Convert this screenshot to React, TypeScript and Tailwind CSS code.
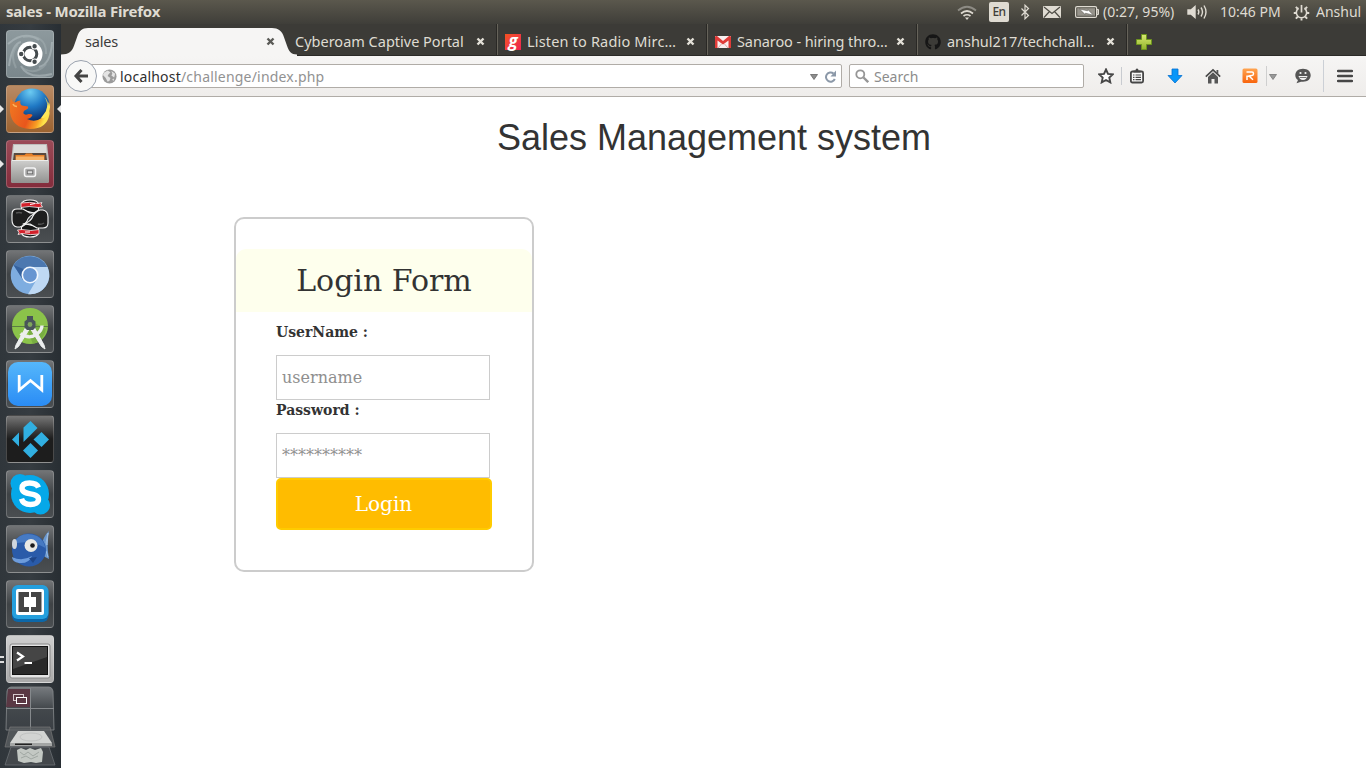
import React from "react";
import { FaGithub } from "react-icons/fa";

type Kids = { children?: React.ReactNode };

/* ---------- launcher ---------- */

function Tile({ children, bg }: Kids & { bg: string }) {
  return (
    <div className={`relative h-12 w-12 shrink-0 overflow-hidden rounded-[4px] border border-white/20 ${bg}`}>
      <svg viewBox="0 0 48 48" className="-m-px block h-12 w-12">
        {children}
      </svg>
    </div>
  );
}

const glass = "bg-linear-to-b from-[#727476] via-[#3f4346] to-[#4a4e51]";

function Dash() {
  return (
    <Tile bg="bg-linear-to-b from-[#8d999d] to-[#7b878c]">
      <g fill="none" stroke="#b9c4c7" strokeWidth="2" opacity=".5">
        <path d="M2 14Q18 0 33 10M46 12Q45 34 33 37M46 44Q22 50 15 36M3 36Q6 14 15 12" />
        <path d="M17 7Q41 4 40 24M40 34Q30 46 16 38M10 38Q3 24 12 15" opacity=".6" />
      </g>
      <circle cx="24" cy="24" r="12.5" fill="#fff" />
      <circle cx="24" cy="24" r="6.800" fill="none" stroke="#454b4e" strokeWidth="3" />
      <g fill="#454b4e" stroke="#fff" strokeWidth="1.200">
        <circle cx="15.200" cy="24" r="2.800" />
        <circle cx="28.600" cy="16.200" r="2.800" />
        <circle cx="28.600" cy="31.800" r="2.800" />
      </g>
    </Tile>
  );
}

function Firefox() {
  return (
    <Tile bg="bg-linear-to-b from-[#b98a64] to-[#9c6330]">
      <defs>
        <radialGradient id="ffb" cx=".45" cy=".1" r=".85">
          <stop offset="0" stopColor="#6ccbf2" />
          <stop offset=".5" stopColor="#1f78c4" />
          <stop offset="1" stopColor="#0b2a66" />
        </radialGradient>
        <linearGradient id="ffo" x1="0" y1="0" x2="1" y2=".3">
          <stop offset="0" stopColor="#f07a22" />
          <stop offset=".6" stopColor="#e9561c" />
          <stop offset=".85" stopColor="#f8a024" />
          <stop offset="1" stopColor="#ffe34a" />
        </linearGradient>
      </defs>
      <circle cx="26" cy="21" r="17.500" fill="url(#ffb)" />
      <path d="M5 13Q6 17 9 17.500Q12 15.500 14.500 15.500Q13.500 19 16 20.500L22 21.500Q23 23.500 19.500 25Q17 26 17.500 28.500Q19 30.500 22.500 29Q25 28.500 26.500 30Q25 33.500 21 34Q29 38 35.500 33Q40 30 41 23Q44 25 43.500 29Q41 44 24 44Q6 43 4 27Q3.500 18 5 13z" fill="url(#ffo)" />
      <path d="M38.500 12Q43 18 40 26L35 33Q39 34 42 29Q46 21 42.500 17L42 21Q42 15 38.500 12z" fill="#ffe65a" />
      <path d="M7 19Q8 21.500 11 21.500" fill="none" stroke="#fbb35a" strokeWidth="1.500" />
    </Tile>
  );
}

function Files() {
  return (
    <Tile bg="bg-linear-to-b from-[#9a4a57] to-[#842c3c]">
      <defs>
        <linearGradient id="fil" x1="0" y1="0" x2="0" y2="1">
          <stop offset="0" stopColor="#cfcfcd" />
          <stop offset="1" stopColor="#929290" />
        </linearGradient>
      </defs>
      <path d="M7 4h34l2 17v20q0 2-2 2H7q-2 0-2-2V21z" fill="#bdbdbb" />
      <path d="M8 5h32l.8 8H7z" fill="#dcdcda" />
      <path d="M8 13h32l1 7H7z" fill="#5a4a40" />
      <path d="M9.500 20v-5h9l1.500-1.500h6l1 1.500h11.500v5z" fill="#e8822a" />
      <path d="M10 16.500h28V20H10z" fill="#f6b46a" />
      <path d="M6.500 20h35l1.500 1v20q0 2-2 2H7q-2 0-2-2V21z" fill="url(#fil)" />
      <path d="M6 20.500h36" stroke="#ececea" />
      <rect x="18.500" y="28" width="11" height="8.500" rx="2" fill="#aaa" stroke="#f5f5f5" strokeWidth="1.500" />
      <rect x="21.300" y="30.800" width="5.400" height="3" fill="#ddd" stroke="#666" strokeWidth=".8" />
    </Tile>
  );
}

function NinjaHalf() {
  return (
    <g stroke="#f4f4f4" strokeWidth="1.100" strokeLinejoin="round">
      <path d="M15.500 15V9q1-4 8.500-4t8.500 4v6L28 18z" fill="#151515" />
      <path d="M6 19Q6 14 11 14H17L24 18H31Q23 20 21 26Q19 30 14 32H11Q6 31 6 25z" fill="#1e1e1e" />
      <path d="M15 8q9-1.500 17 .5l4-1-1 2 1.500 2.500-4.500.5Q23 10.500 15 12.500z" fill="#d3202a" strokeWidth=".8" />
    </g>
  );
}

function Ninja() {
  return (
    <Tile bg={glass}>
      <NinjaHalf />
      <g transform="rotate(180 24 23.500)">
        <NinjaHalf />
      </g>
      <path d="M24 9.500l5-1M19 37h5" stroke="#fff" strokeWidth="1.200" />
      <path d="M10 18q3-1 6 0M32 29q3 1 6-1" stroke="#555" strokeWidth="1.500" fill="none" />
    </Tile>
  );
}

function Chromium() {
  return (
    <Tile bg={glass}>
      <circle cx="24" cy="25" r="19.300" fill="#7eade0" />
      <path d="M7.500 15A19.300 19.300 0 0 1 41 17H24L17 29z" fill="#4c78b0" />
      <path d="M24 17h17.500A19.300 19.300 0 0 1 22 44.200L31 29z" fill="#bfd9f4" />
      <path d="M7.500 15L17 30l3-10z" fill="#35619d" />
      <circle cx="24" cy="25" r="8.500" fill="#f3f8fe" />
      <circle cx="24" cy="25" r="6.900" fill="#6795d1" />
    </Tile>
  );
}

function AndroidStudio() {
  return (
    <Tile bg={glass}>
      <circle cx="24" cy="21" r="18" fill="#8bc34a" />
      <path d="M25 16l15 8a18 18 0 0 1-13 15L20 22z" fill="#6d9f3c" opacity=".6" />
      <path d="M6 21.500h36" stroke="#5b7d43" />
      <path d="M14.500 28.500Q23 35 31 29Q36 25 36 20.500" stroke="#eceeee" strokeWidth="3.400" fill="none" />
      <path d="M20.500 21L10 40l-1 4 3.500-2.500L24 23zM27.500 21L38 40l1 4-3.500-2.500L24 23z" fill="#eceeee" stroke="#eceeee" />
      <path d="M21 11h6v3.500l2.500 2v6L27 25h-6l-2.500-2.500v-6l2.500-2z" fill="#49545a" />
      <circle cx="24" cy="19.500" r="2.400" fill="#7fa65d" />
    </Tile>
  );
}

function Writer() {
  return (
    <Tile bg={glass}>
      <defs>
        <linearGradient id="wps" x1="0" y1="0" x2="0" y2="1">
          <stop offset="0" stopColor="#55b7fb" />
          <stop offset="1" stopColor="#2a8cf5" />
        </linearGradient>
      </defs>
      <rect x="2" y="2" width="44" height="44" rx="10" fill="url(#wps)" />
      <path d="M13.200 15v15L24.500 20.500 35.800 30V15" fill="none" stroke="#fff" strokeWidth="2.800" />
    </Tile>
  );
}

function Kodi() {
  return (
    <Tile bg="bg-linear-to-b from-[#777] to-[#1d1d1d] to-50%">
      <g fill="#31afe1">
        <path d="M17.500 27V12.500L24.500 6l7 7z" />
        <path d="M27.500 24.500l8-7.500 7.500 7.500-7.500 7.500z" />
        <path d="M17 35.500l7.500-7.500 7.500 7.500-7.500 7.500z" />
        <path d="M6 24.500l7-7v14z" />
      </g>
    </Tile>
  );
}

function Skype() {
  return (
    <Tile bg={glass}>
      <g fill="#05a8e9">
        <circle cx="24" cy="24" r="19" />
        <circle cx="14" cy="13.500" r="9.500" />
        <circle cx="34.500" cy="35" r="9.500" />
      </g>
      <path d="M32.500 17.500C31 13.500 27 13 23.500 13c-5 0-7.500 2-7.500 5.300 0 8 16.500 3 16.500 11 0 3.500-3.500 5.200-8 5.200-5 0-8-2-9-5.800" fill="none" stroke="#fff" strokeWidth="5.400" />
    </Tile>
  );
}

function Fish() {
  return (
    <Tile bg={glass}>
      <path d="M35 23q2-12 8-17-3 12 0 28-5-2-8-6z" fill="#6a98d0" />
      <path d="M40 18l2-10-1 12zM40 26l2 6" stroke="#9abbe0" fill="#8bb1dd" />
      <ellipse cx="23" cy="25" rx="17" ry="16.500" fill="#2a5ba9" />
      <path d="M8 17Q16 5 31 11q7 4 8.500 12Q24 14 7 19z" fill="#467ac3" />
      <path d="M6 32q10 5 20-1-3 8-13 7-7-1-7-6z" fill="#6d9cdc" />
      <ellipse cx="8.500" cy="19" rx="2.500" ry="5" fill="#cfd6dd" />
      <circle cx="25" cy="20.500" r="6.500" fill="#e9e9e4" />
      <circle cx="26.500" cy="20.500" r="2.300" fill="#1b1b1b" />
      <path d="M23 33l8-1-4 6z" fill="#1f4688" />
    </Tile>
  );
}

function Brackets() {
  return (
    <Tile bg={glass}>
      <rect x="6" y="7" width="36.500" height="35" rx="6" fill="#0c67a8" />
      <rect x="6" y="5" width="36.500" height="34" rx="6" fill="#259fdd" />
      <rect x="10" y="9" width="28" height="26" rx="2" fill="#fff" />
      <path d="M12.500 12H23v5h-5v10h5v5H12.500zM25 12h10.500v20H25v-5h5V17h-5z" fill="#444" />
    </Tile>
  );
}

function Terminal() {
  return (
    <Tile bg="bg-linear-to-b from-[#cfcfcf] to-[#a9a9a9]">
      <rect x="4" y="9" width="40" height="34" rx="2" fill="#e4e4e4" stroke="#888" />
      <rect x="6.500" y="11.500" width="35" height="28" fill="#292929" stroke="#111" />
      <path d="M7 12h34v10L7 34z" fill="#454545" />
      <path d="M11 17.500l6 4-6 4M18.500 28h7.500" fill="none" stroke="#fff" strokeWidth="2.200" />
    </Tile>
  );
}

function FoldedStack() {
  return (
    <svg viewBox="0 0 54 81" className="mt-1 -ml-[3px] block h-[81px] w-[54px] shrink-0">
      <defs>
        <linearGradient id="fg" x1="0" y1="0" x2="0" y2="1">
          <stop offset="0" stopColor="#777b7f" />
          <stop offset=".5" stopColor="#43484c" />
          <stop offset="1" stopColor="#3a3f44" />
        </linearGradient>
      </defs>
      <path d="M8 1h38q3 0 4 4l1 39H3L4 5q1-4 4-4z" fill="url(#fg)" stroke="#85898c" strokeWidth=".8" />
      <path d="M5 3h22v18H3z" fill="#5a3844" />
      <path d="M3 22.500h48M27.500 2v42" stroke="#85898c" />
      <rect x="10.500" y="8.500" width="10" height="6" fill="none" stroke="#d5c8cc" />
      <rect x="13.500" y="11.500" width="10" height="6" fill="#5a3844" stroke="#fff" />
      <path d="M7 41h40l5 20H2z" fill="#5c6063" fillOpacity=".75" stroke="#777" strokeWidth=".7" />
      <path d="M15 45h26l8 12H7z" fill="#d2d4d2" />
      <path d="M7 57h42v3H7z" fill="#a3a5a4" />
      <ellipse cx="28" cy="51" rx="11" ry="4" fill="none" stroke="#c0c2c1" />
      <path d="M8 61h38l6 18H2z" fill="#484c50" fillOpacity=".8" stroke="#707478" strokeWidth=".7" />
      <path d="M14 64l4-2 5 2 4-2 5 2 6-2 2 4-1 10-6 1-5-1-7 1-6-2z" fill="#c3c8c3" />
      <path d="M17 66l4 3 4-3 5 4 6-4M18 72l5-2 5 3 7-3" stroke="#a0a7a2" fill="none" />
      <path d="M12 57.500h17V59H12z" fill="#222" />
    </svg>
  );
}

function Pip({ flip, top }: { flip?: boolean; top: string }) {
  return (
    <svg viewBox="0 0 4 8" className={`absolute h-2 w-1 ${flip ? "right-0" : "left-0"} ${top}`}>
      <path d={flip ? "M4 0v8L0 4z" : "M0 0v8l4-4z"} fill="#e8e8e8" />
    </svg>
  );
}

function Launcher() {
  return (
    <aside className="relative flex w-[61px] shrink-0 flex-col gap-[7px] overflow-hidden bg-linear-to-r from-[#30363b] via-[#363c41] to-[#282e33] pt-[6px] pl-[6px]">
      <Dash />
      <Firefox />
      <Files />
      <Ninja />
      <Chromium />
      <AndroidStudio />
      <Writer />
      <Kodi />
      <Skype />
      <Fish />
      <Brackets />
      <Terminal />
      <div className="-mt-[8px]">
        <FoldedStack />
      </div>
      <Pip top="top-[81px]" />
      <Pip flip top="top-[81px]" />
      <Pip top="top-[136px]" />
      <div className="absolute top-[632px] left-0 flex flex-col gap-[3px]">
        <i className="h-0.5 w-1 bg-[#ddd]" />
        <i className="h-0.5 w-1 bg-[#ddd]" />
      </div>
    </aside>
  );
}

/* ---------- top panel ---------- */

function Panel() {
  return (
    <header className="flex h-6 shrink-0 items-center bg-linear-to-b from-[#5b584d] to-[#3f3e39] pl-[6px] text-[14px] text-[#dfdbd2]">
      <span className="grow pb-[2px] text-[15px] leading-5 font-bold tracking-[-0.2px] whitespace-nowrap">sales - Mozilla Firefox</span>
      <svg viewBox="0 0 20 16" className="mt-0.5 h-4 w-5 shrink-0" fill="none" strokeWidth="1.700">
        <path d="M1 5.500Q10-2 19 5.500" stroke="#8d8b84" />
        <path d="M4 8.500Q10 3.500 16 8.500M6.500 11Q10 8.500 13.500 11" stroke="#dfdbd2" />
        <path d="M8 12.500h4L10 15z" fill="#dfdbd2" />
      </svg>
      <span className="ml-[12px] flex h-5 w-5 shrink-0 items-center justify-center rounded-[2px] bg-[#dfdbd2] text-[12px] font-medium tracking-[-0.5px] text-[#3f3e39]">En</span>
      <svg viewBox="0 0 10 16" className="ml-[11px] h-4 w-[10px] shrink-0" fill="none" stroke="#dfdbd2" strokeWidth="1.200">
        <path d="M1.500 4.500l7 7L5 14.800V1.200l3.500 3.300-7 7" />
      </svg>
      <svg viewBox="0 0 18 12" className="ml-[13px] h-3 w-[18px] shrink-0">
        <rect width="18" height="12" rx="1" fill="#dfdbd2" />
        <path d="M1 1l8 6.500L17 1M1 11.500l5.500-6M17 11.500l-5.500-6" fill="none" stroke="#4d4b44" strokeWidth="1.200" />
      </svg>
      <svg viewBox="0 0 25 12" className="ml-[14px] h-3 w-[25px] shrink-0">
        <rect x=".6" y=".6" width="21" height="10.800" rx="1.500" fill="none" stroke="#dfdbd2" strokeWidth="1.200" />
        <rect x="2.200" y="2.200" width="17.800" height="7.600" fill="#96938b" />
        <path d="M22 3.500h1.500v5H22z" fill="none" stroke="#dfdbd2" />
        <path d="M4.500 3l8 1.800.3-1.300L18.500 9.200l-8-2-.3 1.400z" fill="#fff" stroke="#4d4b44" strokeWidth=".5" />
      </svg>
      <span className="ml-[3px] w-[84px] shrink-0 leading-5 whitespace-nowrap">(0:27, 95%)</span>
      <svg viewBox="0 0 21 16" className="h-4 w-[21px] shrink-0" fill="none" stroke="#dfdbd2" strokeWidth="1.400">
        <path d="M1 6h3l4-3.500v11L4 10H1z" fill="#dfdbd2" />
        <path d="M11 5.500q1.700 2.500 0 5M14 3.500q3 4.500 0 9" />
        <path d="M17 1.500q4 6.500 0 13" />
      </svg>
      <span className="ml-[12px] w-[73px] shrink-0 leading-5 whitespace-nowrap">10:46 PM</span>
      <svg viewBox="0 0 18 18" className="h-[17px] w-[17px] shrink-0" fill="none" stroke="#dfdbd2">
        <path d="M6 4.500A5.500 5.500 0 1 0 12 4.500" strokeWidth="1.700" />
        <path d="M9 1v8" strokeWidth="1.800" />
        <path d="M5 5L3 3M13 5l2-2M3.500 9.500H.8M14.500 9.500h2.700M5 13.500l-2 2M13 13.500l2 2M9 15v2.500" strokeWidth="2" />
      </svg>
      <span className="ml-[6px] w-[50px] shrink-0 leading-5 whitespace-nowrap">Anshul</span>
    </header>
  );
}

/* ---------- browser chrome ---------- */

function Close() {
  return (
    <svg viewBox="0 0 9 9" className="mr-[12px] ml-auto h-[9px] w-[9px] shrink-0">
      <path d="M1.500 1.500l6 6M7.500 1.500l-6 6" stroke="#e3e0d8" strokeWidth="2.400" />
    </svg>
  );
}

function Tab({ children, icon, tracking }: Kids & { icon?: React.ReactNode; tracking: string }) {
  return (
    <div className="flex h-full w-[210px] shrink-0 items-center border-r border-[#66635a] pt-[4px] shadow-[inset_-1px_0_0_#292825]">
      {icon}
      <span className={`whitespace-nowrap text-[#dfdbd2] ${tracking}`}>{children}</span>
      <Close />
    </div>
  );
}

function Tabs() {
  return (
    <div className="flex h-8 shrink-0 border-b border-[#2b2a27] bg-[#3c3b37] text-[14.5px]">
      <div className="relative flex w-[230px] shrink-0 items-center pt-[4px] pl-6 text-[#3c3c3c]">
        <svg viewBox="0 0 236 29" className="absolute top-[4px] left-0 h-7 w-[236px]" preserveAspectRatio="none">
          <path d="M0 29v-1.500c8 0 11-3 13-9l3-9C18 3 21 0 27 0h184c6 0 10 3 12 9.500l3 9c2 6 4 9 10 9V29z" fill="#f6f5f4" />
        </svg>
        <span className="relative tracking-[-0.2px]">sales</span>
        <svg viewBox="0 0 9 9" className="absolute top-[13px] left-[205px] h-[9px] w-[9px]">
          <path d="M1.500 1.500l6 6M7.500 1.500l-6 6" stroke="#5a5a56" strokeWidth="2.400" />
        </svg>
      </div>
      <div className="flex h-full w-[207px] shrink-0 items-center border-r border-[#66635a] pt-[4px] pl-1 shadow-[inset_-1px_0_0_#292825]">
        <span className="whitespace-nowrap text-[#dfdbd2]">Cyberoam Captive Portal</span>
        <Close />
      </div>
      <Tab
        tracking="tracking-[0.17px]"
        icon={
          <span className="mr-[6px] ml-[7px] flex h-4 w-4 items-center justify-center bg-linear-to-br from-[#f4511e] to-[#ee2150] pb-[3px] font-['Open_Sans'] text-[17px] leading-none font-bold text-white italic">
            g
          </span>
        }
      >
        Listen to Radio Mirc…
      </Tab>
      <Tab
        tracking="tracking-[-0.1px]"
        icon={
          <svg viewBox="0 0 16 12" className="mr-[6px] ml-[7px] h-3 w-4 shrink-0">
            <path d="M0 0h16v12H0z" fill="#f7eeee" />
            <path d="M0 1q0-1 1-1h1l6 5 6-5h1q1 0 1 1v11h-2.500V4.500L8 8.500l-5.500-4V12H0z" fill="#df3b38" />
            <path d="M3 12l3.500-4M13 12L9.500 8" stroke="#dba9a8" />
          </svg>
        }
      >
        Sanaroo - hiring thro…
      </Tab>
      <Tab tracking="tracking-[-0.05px]" icon={<FaGithub className="mr-[6px] ml-[7px] h-4 w-4 shrink-0 text-[#161616]" />}>
        anshul217/techchall…
      </Tab>
      <svg viewBox="0 0 16 16" className="mt-[10px] ml-[8px] h-4 w-4">
        <defs>
          <linearGradient id="pl" x1="0" y1="0" x2="0" y2="1">
            <stop offset="0" stopColor="#d8ea72" />
            <stop offset="1" stopColor="#92b32b" />
          </linearGradient>
        </defs>
        <path d="M5.500.5h5v5h5v5h-5v5h-5v-5h-5v-5h5z" fill="url(#pl)" stroke="#6d951d" />
      </svg>
    </div>
  );
}

function Toolbar() {
  return (
    <div className="flex h-[41px] shrink-0 items-center border-b border-[#b0aca7] bg-linear-to-b from-[#f6f5f4] to-[#efedeb] text-[14px]">
      <div className="z-10 ml-1 flex h-8 w-8 shrink-0 items-center justify-center rounded-full border border-[#9aa2ae] bg-[#f8f8f7]">
        <svg viewBox="0 0 16 16" className="h-4 w-4">
          <path d="M8.500 2L3 8l5.500 6M3 8h12" fill="none" stroke="#444" strokeWidth="3" />
        </svg>
      </div>
      <div className="-ml-[6px] flex h-6 w-[751px] shrink-0 items-center rounded-r-[2px] border border-[#b0aca7] bg-white pl-[10px]">
        <svg viewBox="0 0 16 16" className="h-[15px] w-[15px]">
          <circle cx="8" cy="8" r="7.500" fill="#9b9b9b" />
          <path d="M2 4l4-2.500 3 2-2 2-1 2 3 2-1 3-2 1-2-4-3-3zM10 2l4 3-1 4-3-2 1-2zM11 11l2-1-1 3z" fill="#e4e4e4" />
        </svg>
        <span className="ml-[3px] grow tracking-[0.2px] whitespace-nowrap text-[#929292]">
          <span className="text-[#2e2e2e]">localhost</span>/challenge/index.php
        </span>
        <svg viewBox="0 0 8 6" className="mt-0.5 h-[6px] w-2">
          <path d="M.5.500h7L4 5.500z" fill="#8d8d8d" stroke="#666" strokeWidth=".8" />
        </svg>
        <svg viewBox="0 0 13 13" className="mr-[4px] ml-[6px] h-[13px] w-[13px]">
          <path d="M9.500 3.500A4.600 4.600 0 1 0 10.800 9" fill="none" stroke="#8b98a8" strokeWidth="2" />
          <path d="M12 .5v6H6.500z" fill="#8b98a8" />
        </svg>
      </div>
      <div className="ml-[7px] flex h-6 w-[235px] shrink-0 items-center rounded-[2px] border border-[#b0aca7] bg-white pl-[5px]">
        <svg viewBox="0 0 14 14" className="h-[14px] w-[14px]" fill="none" stroke="#969696">
          <circle cx="5.300" cy="5.300" r="4" strokeWidth="1.800" />
          <path d="M8.500 8.500l4.700 4.700" strokeWidth="2.400" />
        </svg>
        <span className="ml-[5px] text-[#8c8c8c]">Search</span>
      </div>
      <svg viewBox="0 0 16 16" className="ml-[14px] h-4 w-4 shrink-0">
        <path d="M8 1.500l2 4.400 4.800.500-3.500 3.200 1 4.800L8 12l-4.300 2.400 1-4.800L1.200 6.400 6 5.900z" fill="#fff" stroke="#464646" strokeWidth="1.900" />
      </svg>
      <i className="ml-[7px] h-[18px] w-px shrink-0 bg-[#c8cbd0]" />
      <svg viewBox="0 0 16 16" className="ml-[7px] h-4 w-4 shrink-0">
        <rect x="1.900" y="3.500" width="12.200" height="11" rx="1.500" fill="#fafafa" stroke="#464646" strokeWidth="1.800" />
        <path d="M4.500 4.500V2.500h2q0-2 1.500-2t1.500 2h2v2z" fill="#464646" />
        <path d="M4 7h1.500M4 9.300h1.500M4 11.600h1.500M6.500 7H12M6.500 9.300H12M6.500 11.600H12" stroke="#464646" strokeWidth="1.200" />
      </svg>
      <svg viewBox="0 0 16 16" className="ml-[22px] h-4 w-4 shrink-0">
        <path d="M5 1h6v6.500h4L8 15 1 7.500h4z" fill="#0996f8" stroke="#0570d0" strokeWidth=".8" />
      </svg>
      <svg viewBox="0 0 16 16" className="ml-[22px] h-4 w-4 shrink-0">
        <path d="M.8 8.700L8 2l7.200 6.700" fill="none" stroke="#494949" strokeWidth="1.700" />
        <path d="M3 9l5-4.800L13 9v6.500H9.500v-4.500h-3v4.500H3zM11.500 2h1.800v4l-1.800-1.500z" fill="#565656" />
      </svg>
      <svg viewBox="0 0 16 16" className="ml-[21px] h-4 w-4 shrink-0">
        <defs>
          <linearGradient id="rr" x1="0" y1="0" x2="0" y2="1">
            <stop offset="0" stopColor="#ffa552" />
            <stop offset="1" stopColor="#f8640c" />
          </linearGradient>
        </defs>
        <rect x=".5" y=".5" width="15" height="14.500" rx="1.500" fill="url(#rr)" />
        <path d="M4.500 4h5.500q1.500 0 1.500 1.700T10 7.400L6.500 8M5 12V8.200L7 8l4 3.800" fill="none" stroke="#fff" strokeWidth="1.500" />
      </svg>
      <i className="ml-[8px] h-[20px] w-px shrink-0 bg-[#cfcfcf]" />
      <svg viewBox="0 0 8 6" className="mt-0.5 ml-[2px] h-[6px] w-2 shrink-0">
        <path d="M.5.500h7L4 5.500z" fill="#999" stroke="#777" strokeWidth=".8" />
      </svg>
      <svg viewBox="0 0 16 16" className="ml-[18px] h-4 w-4 shrink-0">
        <path d="M8 .8c4.700 0 7.700 2.800 7.700 6.500s-3 6.500-7.700 6.500l-2 0-4.500 1.500 1.500-3.200C1.300 11 .3 9.500.3 7.300.3 3.600 3.300.8 8 .8z" fill="#555" />
        <path d="M3.500 8h9q-1 4-4.500 4T3.500 8z" fill="#f3f3f3" />
        <path d="M4.500 9.500h7" stroke="#555" strokeWidth=".8" />
        <circle cx="5.500" cy="5" r="1.100" fill="#f3f3f3" />
        <circle cx="10.500" cy="5" r="1.100" fill="#f3f3f3" />
      </svg>
      <i className="ml-[12px] h-8 w-px shrink-0 bg-[#ccd0d6]" />
      <svg viewBox="0 0 16 14" className="ml-[13px] h-[14px] w-4 shrink-0">
        <path d="M1 2h14M1 7h14M1 12h14" stroke="#464646" strokeWidth="2.500" strokeLinecap="round" />
      </svg>
    </div>
  );
}

/* ---------- page ---------- */

const label = "block font-['DejaVu_Serif',serif] text-[14px] leading-5 font-bold";
const field =
  "block h-[45px] w-[214px] border border-[#ccc] bg-white px-[5px] font-['DejaVu_Serif',serif] text-[16px] outline-none placeholder:text-[#8f8f8f] placeholder:opacity-100";

function LoginPage() {
  return (
    <main className="flex grow flex-col bg-white text-[#333]">
      <h1 className="mt-[21px] pl-px text-center font-['Liberation_Sans',sans-serif] text-[36px] leading-[40px]">Sales Management system</h1>
      <form
        className="mt-[59px] ml-[173px] h-[355px] w-[300px] rounded-[10px] border-2 border-[#ccc] pt-[30px] font-['DejaVu_Serif',serif]"
        onSubmit={(e) => e.preventDefault()}
      >
        <h2 className="h-[63px] rounded-t-[10px] bg-[#feffed] py-[15px] text-center text-[30px] leading-[33px]">Login Form</h2>
        <div className="pt-[10px] pl-10">
          <label className={label}>UserName :</label>
          <input className={`${field} mt-[13px]`} placeholder="username" />
          <label className={label}>Password :</label>
          <input className={`${field} mt-[13px]`} type="password" placeholder="**********" />
          <button className="block h-[52px] w-[216px] rounded-[5px] border-2 border-[#ffcb00] bg-[#ffbc00] pr-px text-[20px] text-white">Login</button>
        </div>
      </form>
    </main>
  );
}

export default function App() {
  return (
    <div className="flex h-[768px] w-[1366px] flex-col overflow-hidden font-['Noto_Sans',sans-serif]">
      <Panel />
      <div className="flex min-h-0 grow">
        <Launcher />
        <div className="flex min-w-0 grow flex-col">
          <Tabs />
          <Toolbar />
          <LoginPage />
        </div>
      </div>
    </div>
  );
}
